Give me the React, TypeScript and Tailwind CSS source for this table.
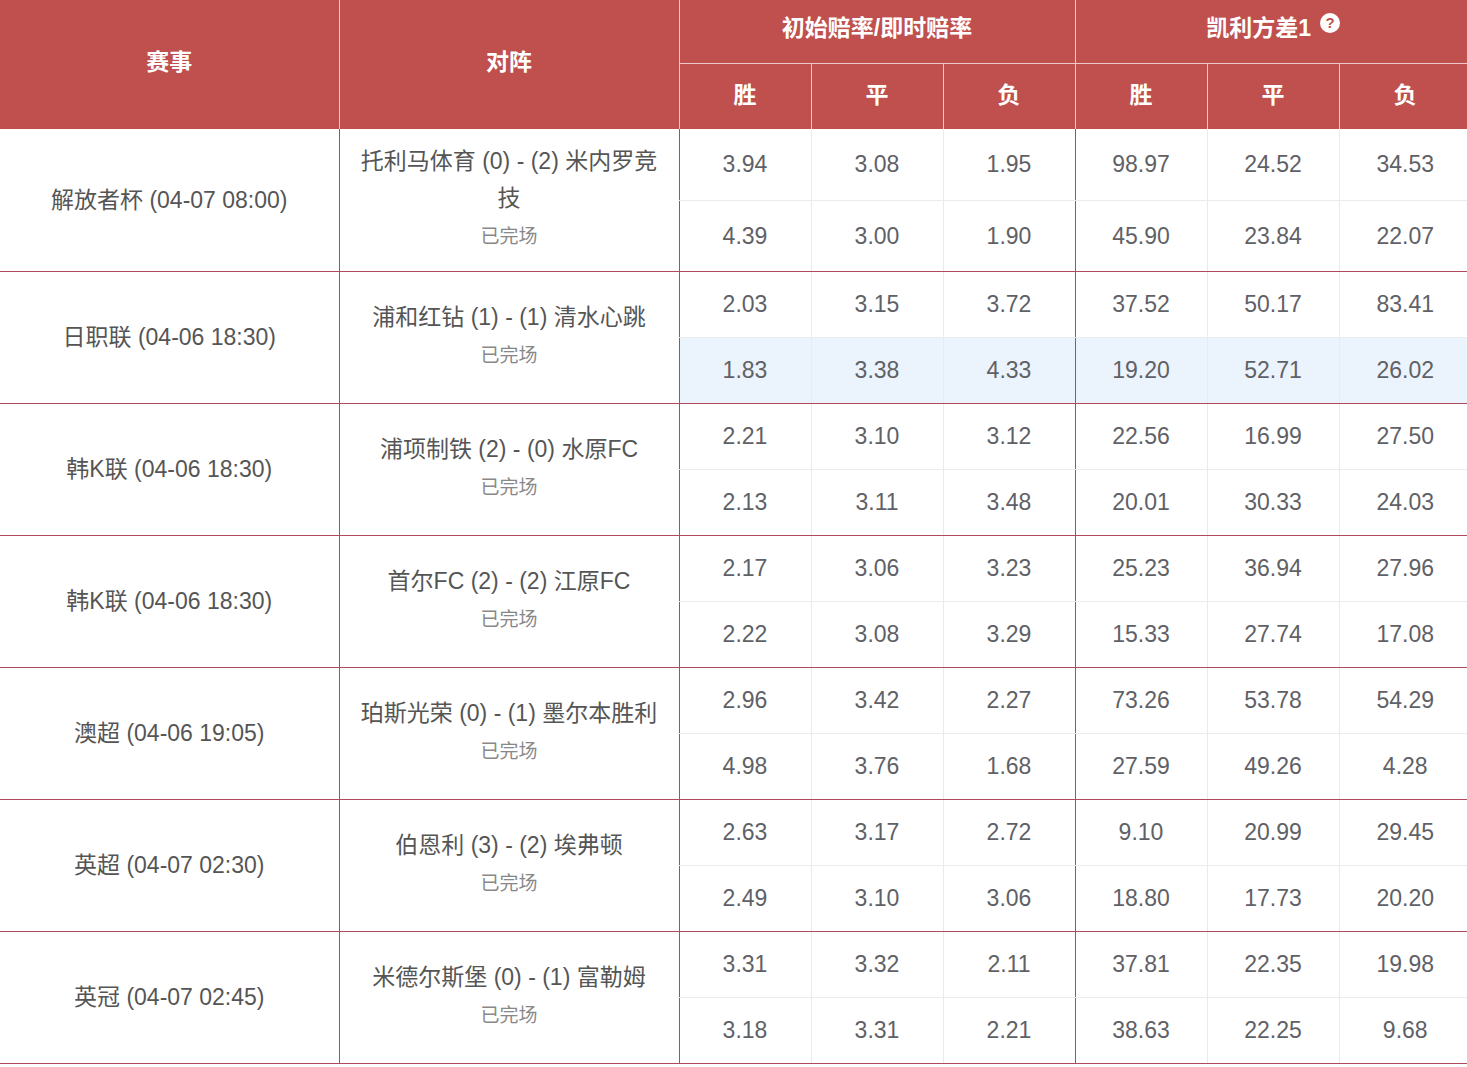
import React from "react"

type Match = {
  league: string
  teams: string
  init: string[]
  live: string[]
  kInit: string[]
  kLive: string[]
  hl?: boolean
}

const matches: Match[] = [
  {
    league: "解放者杯 (04-07 08:00)",
    teams: "托利马体育 (0) - (2) 米内罗竞技",
    init: ["3.94", "3.08", "1.95"],
    live: ["4.39", "3.00", "1.90"],
    kInit: ["98.97", "24.52", "34.53"],
    kLive: ["45.90", "23.84", "22.07"],
  },
  {
    league: "日职联 (04-06 18:30)",
    teams: "浦和红钻 (1) - (1) 清水心跳",
    init: ["2.03", "3.15", "3.72"],
    live: ["1.83", "3.38", "4.33"],
    kInit: ["37.52", "50.17", "83.41"],
    kLive: ["19.20", "52.71", "26.02"],
    hl: true,
  },
  {
    league: "韩K联 (04-06 18:30)",
    teams: "浦项制铁 (2) - (0) 水原FC",
    init: ["2.21", "3.10", "3.12"],
    live: ["2.13", "3.11", "3.48"],
    kInit: ["22.56", "16.99", "27.50"],
    kLive: ["20.01", "30.33", "24.03"],
  },
  {
    league: "韩K联 (04-06 18:30)",
    teams: "首尔FC (2) - (2) 江原FC",
    init: ["2.17", "3.06", "3.23"],
    live: ["2.22", "3.08", "3.29"],
    kInit: ["25.23", "36.94", "27.96"],
    kLive: ["15.33", "27.74", "17.08"],
  },
  {
    league: "澳超 (04-06 19:05)",
    teams: "珀斯光荣 (0) - (1) 墨尔本胜利",
    init: ["2.96", "3.42", "2.27"],
    live: ["4.98", "3.76", "1.68"],
    kInit: ["73.26", "53.78", "54.29"],
    kLive: ["27.59", "49.26", "4.28"],
  },
  {
    league: "英超 (04-07 02:30)",
    teams: "伯恩利 (3) - (2) 埃弗顿",
    init: ["2.63", "3.17", "2.72"],
    live: ["2.49", "3.10", "3.06"],
    kInit: ["9.10", "20.99", "29.45"],
    kLive: ["18.80", "17.73", "20.20"],
  },
  {
    league: "英冠 (04-07 02:45)",
    teams: "米德尔斯堡 (0) - (1) 富勒姆",
    init: ["3.31", "3.32", "2.11"],
    live: ["3.18", "3.31", "2.21"],
    kInit: ["37.81", "22.35", "19.98"],
    kLive: ["38.63", "22.25", "9.68"],
  },
]

// one sub-row of odds: 3 initial/live odds + 3 kelly values
function OddsCells({ vals, kelly, hl, last }: { vals: string[]; kelly: string[]; hl?: boolean; last?: boolean }) {
  const bg = hl ? "bg-[#ebf3fc]" : ""
  const bottom = last ? "border-b border-b-[#b04a5a]" : "border-b border-b-[#ebebeb]"
  return (
    <>
      {[...vals, ...kelly].map((v, i) => (
        <td
          key={i}
          className={`h-[66px] text-center ${bottom} ${i % 3 === 0 ? "border-l border-l-[#b04a5a]" : "border-l border-l-[#ebebeb]"} ${bg}`}
        >
          {v}
        </td>
      ))}
    </>
  )
}

export default function App() {
  return (
    <div className="w-full h-[1067px] overflow-hidden bg-white font-['Liberation_Sans','Noto_Sans_CJK_SC',sans-serif]">
      <table className="w-[1471px] table-fixed border-collapse text-[23px] text-[#5f6166]">
        <colgroup>
          <col className="w-[339px]" />
          <col className="w-[340px]" />
          <col className="w-[132px]" />
          <col className="w-[132px]" />
          <col className="w-[132px]" />
          <col className="w-[132px]" />
          <col className="w-[132px]" />
          <col className="w-[132px]" />
        </colgroup>
        <thead className="bg-[#c0504d] text-white font-bold">
          <tr>
            <th rowSpan={2} className="text-center border-r border-r-[#eec9c9] pb-[4px]">
              赛事
            </th>
            <th rowSpan={2} className="text-center border-r border-r-[#eec9c9] pb-[4px]">
              对阵
            </th>
            <th colSpan={3} className="h-[63px] text-center border-r border-r-[#eec9c9] border-b border-b-[#eec9c9] pb-[6px]">
              初始赔率/即时赔率
            </th>
            <th colSpan={3} className="text-center border-b border-b-[#eec9c9] pb-[6px]">
              <span className="inline-flex items-center gap-[9px]">
                凯利方差1
                <span className="-mt-[10px] w-[20px] h-[20px] rounded-full bg-white text-[#c0504d] text-[15px] leading-[20px] font-bold inline-flex items-center justify-center">
                  ?
                </span>
              </span>
            </th>
          </tr>
          <tr>
            {["胜", "平", "负", "胜", "平", "负"].map((t, i) => (
              <th
                key={i}
                className={`h-[66px] text-center pb-[2px] ${i < 5 ? "border-r border-r-[#eec9c9]" : ""}`}
              >
                {t}
              </th>
            ))}
          </tr>
        </thead>
        <tbody>
          {matches.map((m, idx) => (
            <React.Fragment key={idx}>
              <tr>
                <td rowSpan={2} className="text-center align-middle text-[#555] border-b border-b-[#b04a5a]">
                  {m.league}
                </td>
                <td rowSpan={2} className="px-4 py-[14px] text-center align-middle border-l border-l-[#b04a5a] border-b border-b-[#b04a5a] text-[#555]">
                  <div className="leading-[37px]">{m.teams}</div>
                  <div className="text-[19px] leading-[40px] text-[#888]">已完场</div>
                </td>
                <OddsCells vals={m.init} kelly={m.kInit} />
              </tr>
              <tr>
                <OddsCells vals={m.live} kelly={m.kLive} hl={m.hl} last />
              </tr>
            </React.Fragment>
          ))}
        </tbody>
      </table>
    </div>
  )
}
